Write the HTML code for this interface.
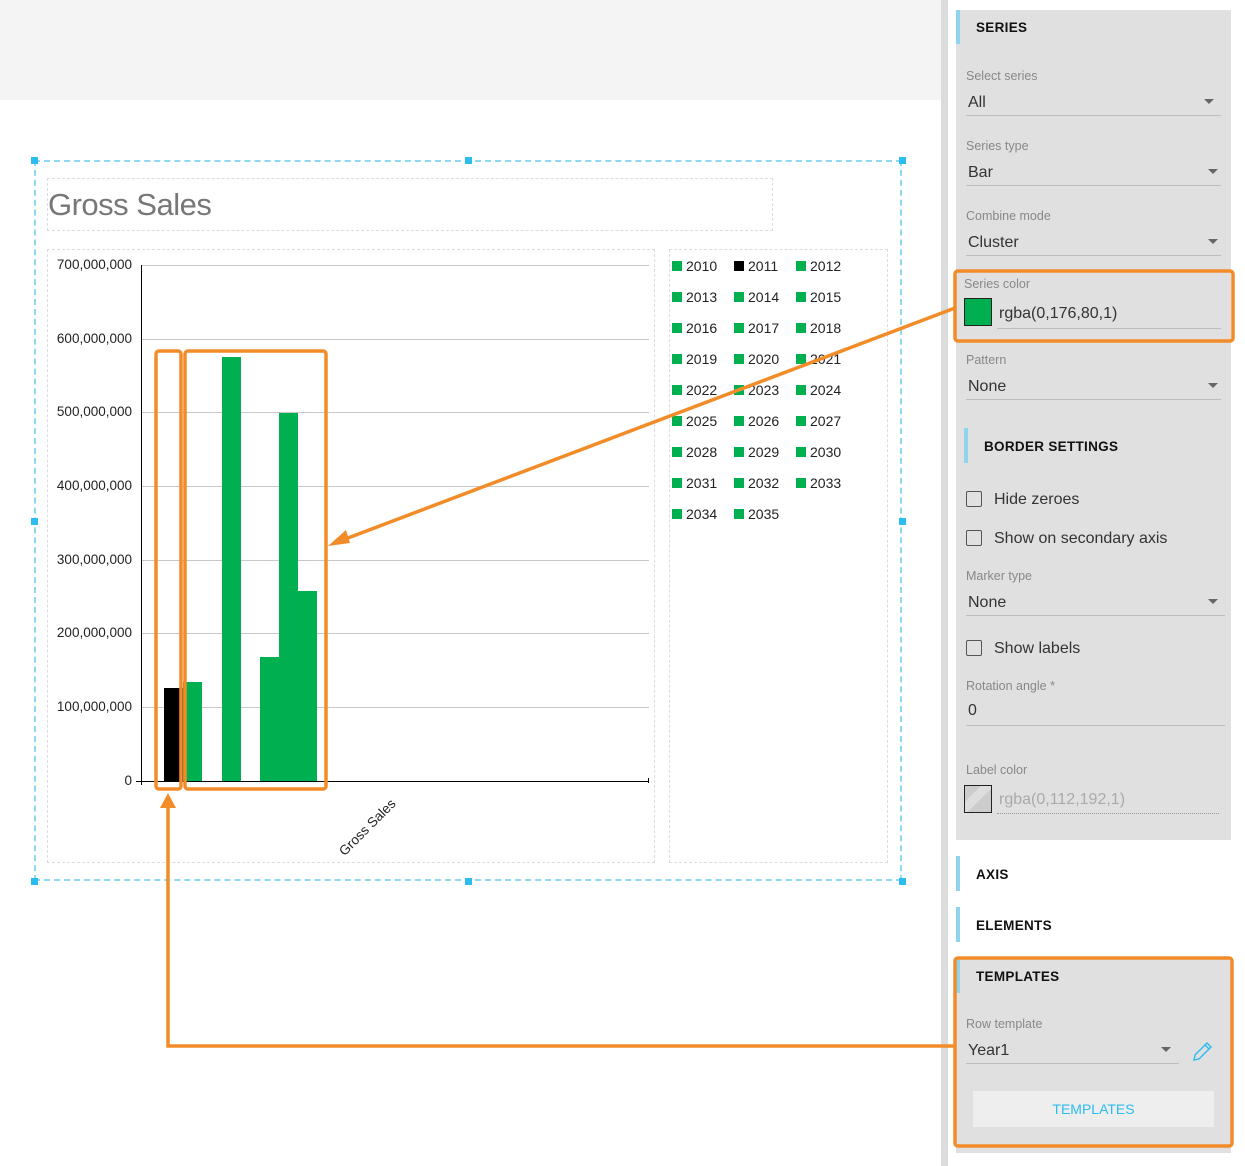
<!DOCTYPE html>
<html><head><meta charset="utf-8">
<style>
*{margin:0;padding:0;box-sizing:border-box}
body{width:1245px;height:1166px;position:relative;overflow:hidden;background:#fff;font-family:"Liberation Sans",sans-serif;color:#333}
.a{position:absolute}
.lbl{position:absolute;font-size:12.5px;color:#888;left:966px}
.val{position:absolute;font-size:16px;color:#333;left:968px}
.ul{position:absolute;left:966px;width:255px;height:1px;background:#bdbdbd}
.tri{position:absolute;width:0;height:0;border-left:5px solid transparent;border-right:5px solid transparent;border-top:5px solid #666}
.hdr{position:absolute;font-size:13.5px;font-weight:bold;color:#111;letter-spacing:.3px}
.bar{position:absolute;width:4px;background:#8fd3ee}
.cb{position:absolute;left:966px;width:16px;height:16px;border:1px solid #555;border-radius:2px}
.cbt{position:absolute;left:994px;font-size:16px;color:#333}
.yl{position:absolute;left:30px;width:102px;text-align:right;font-size:13.5px;color:#222}
.gl{position:absolute;left:141px;width:508px;height:1px;background:#c8c8c8}
.lg{position:absolute;font-size:14px;color:#222}
.lg i{display:inline-block;width:10px;height:10px;background:#00b050;margin-right:4px;vertical-align:0px}
.h{position:absolute;width:7px;height:7px;background:#2bbcf0}
</style></head><body>
<div class="a" style="left:0;top:0;width:942px;height:100px;background:#f4f4f4"></div>
<div class="a" style="left:941px;top:0;width:7px;height:1166px;background:#dcdcdc"></div>

<div class="a" style="left:34px;top:160px;width:868px;height:721px;border:2px dashed #8fd8f2"></div>
<div class="h" style="left:31px;top:157px"></div><div class="h" style="left:465px;top:157px"></div><div class="h" style="left:899px;top:157px"></div>
<div class="h" style="left:31px;top:518px"></div><div class="h" style="left:899px;top:518px"></div>
<div class="h" style="left:31px;top:878px"></div><div class="h" style="left:465px;top:878px"></div><div class="h" style="left:899px;top:878px"></div>

<div class="a" style="left:47px;top:178px;width:726px;height:53px;border:1px dashed #ddd"></div>
<div class="a" style="left:48px;top:187px;font-size:31px;color:#777;letter-spacing:-0.5px">Gross Sales</div>
<div class="a" style="left:47px;top:249px;width:608px;height:614px;border:1px dashed #ddd"></div>
<div class="a" style="left:669px;top:249px;width:219px;height:614px;border:1px dashed #ddd"></div>

<div class="gl" style="top:265px"></div><div class="gl" style="top:339px"></div><div class="gl" style="top:412px"></div><div class="gl" style="top:486px"></div><div class="gl" style="top:560px"></div><div class="gl" style="top:633px"></div><div class="gl" style="top:707px"></div>
<div class="a" style="left:136px;top:781px;width:513px;height:1px;background:#000"></div>
<div class="a" style="left:141px;top:265px;width:1px;height:520px;background:#000"></div>
<div class="a" style="left:648px;top:778px;width:1px;height:5px;background:#000"></div>
<div class="yl" style="top:257px">700,000,000</div>
<div class="yl" style="top:331px">600,000,000</div>
<div class="yl" style="top:404px">500,000,000</div>
<div class="yl" style="top:478px">400,000,000</div>
<div class="yl" style="top:552px">300,000,000</div>
<div class="yl" style="top:625px">200,000,000</div>
<div class="yl" style="top:699px">100,000,000</div>
<div class="yl" style="top:773px">0</div>

<div class="a" style="left:164px;top:688px;width:19px;height:93px;background:#000"></div>
<div class="a" style="left:183px;top:682px;width:19px;height:99px;background:#00b050"></div>
<div class="a" style="left:222px;top:357px;width:19px;height:424px;background:#00b050"></div>
<div class="a" style="left:260px;top:657px;width:19px;height:124px;background:#00b050"></div>
<div class="a" style="left:279px;top:413px;width:19px;height:368px;background:#00b050"></div>
<div class="a" style="left:298px;top:591px;width:19px;height:190px;background:#00b050"></div>
<div class="a" style="font-size:13.5px;color:#222;transform:rotate(-45deg);transform-origin:left top;white-space:nowrap;left:336px;top:848px">Gross Sales</div>

<div class="lg" style="left:672px;top:258px"><i></i>2010</div><div class="lg" style="left:734px;top:258px"><i style="background:#000"></i>2011</div><div class="lg" style="left:796px;top:258px"><i></i>2012</div>
<div class="lg" style="left:672px;top:289px"><i></i>2013</div><div class="lg" style="left:734px;top:289px"><i></i>2014</div><div class="lg" style="left:796px;top:289px"><i></i>2015</div>
<div class="lg" style="left:672px;top:320px"><i></i>2016</div><div class="lg" style="left:734px;top:320px"><i></i>2017</div><div class="lg" style="left:796px;top:320px"><i></i>2018</div>
<div class="lg" style="left:672px;top:351px"><i></i>2019</div><div class="lg" style="left:734px;top:351px"><i></i>2020</div><div class="lg" style="left:796px;top:351px"><i></i>2021</div>
<div class="lg" style="left:672px;top:382px"><i></i>2022</div><div class="lg" style="left:734px;top:382px"><i></i>2023</div><div class="lg" style="left:796px;top:382px"><i></i>2024</div>
<div class="lg" style="left:672px;top:413px"><i></i>2025</div><div class="lg" style="left:734px;top:413px"><i></i>2026</div><div class="lg" style="left:796px;top:413px"><i></i>2027</div>
<div class="lg" style="left:672px;top:444px"><i></i>2028</div><div class="lg" style="left:734px;top:444px"><i></i>2029</div><div class="lg" style="left:796px;top:444px"><i></i>2030</div>
<div class="lg" style="left:672px;top:475px"><i></i>2031</div><div class="lg" style="left:734px;top:475px"><i></i>2032</div><div class="lg" style="left:796px;top:475px"><i></i>2033</div>
<div class="lg" style="left:672px;top:506px"><i></i>2034</div><div class="lg" style="left:734px;top:506px"><i></i>2035</div>

<div class="a" style="left:956px;top:10px;width:275px;height:830px;background:#e0e0e0"></div>
<div class="bar" style="left:956px;top:10px;height:34px"></div>
<div class="hdr" style="left:976px;top:20px">SERIES</div>
<div class="lbl" style="top:69px">Select series</div><div class="val" style="top:94px">All</div><div class="tri" style="left:1204px;top:99px"></div><div class="ul" style="top:115px"></div>
<div class="lbl" style="top:139px">Series type</div><div class="val" style="top:164px">Bar</div><div class="tri" style="left:1208px;top:169px"></div><div class="ul" style="top:185px"></div>
<div class="lbl" style="top:209px">Combine mode</div><div class="val" style="top:234px">Cluster</div><div class="tri" style="left:1208px;top:239px"></div><div class="ul" style="top:255px"></div>
<div class="lbl" style="top:277px;left:964px">Series color</div>
<div class="a" style="left:964px;top:298px;width:28px;height:28px;background:#00b050;border:1px solid #222"></div>
<div class="val" style="top:305px;left:999px">rgba(0,176,80,1)</div><div class="ul" style="top:328px;left:997px;width:224px"></div>
<div class="lbl" style="top:353px">Pattern</div><div class="val" style="top:378px">None</div><div class="tri" style="left:1208px;top:383px"></div><div class="ul" style="top:399px"></div>
<div class="bar" style="left:964px;top:428px;height:35px"></div>
<div class="hdr" style="left:984px;top:439px">BORDER SETTINGS</div>
<div class="cb" style="top:491px"></div><div class="cbt" style="top:491px">Hide zeroes</div>
<div class="cb" style="top:530px"></div><div class="cbt" style="top:530px">Show on secondary axis</div>
<div class="lbl" style="top:569px">Marker type</div><div class="val" style="top:594px">None</div><div class="tri" style="left:1208px;top:599px"></div><div class="ul" style="top:615px;width:259px"></div>
<div class="cb" style="top:640px"></div><div class="cbt" style="top:640px">Show labels</div>
<div class="lbl" style="top:679px">Rotation angle *</div><div class="val" style="top:702px">0</div><div class="ul" style="top:725px;width:259px"></div>
<div class="lbl" style="top:763px;left:966px">Label color</div>
<div class="a" style="left:964px;top:785px;width:28px;height:28px;border:1px solid #222;background:linear-gradient(135deg,#ccc 30%,#ddd 30%,#ddd 55%,#ccc 55%)"></div>
<div class="val" style="top:791px;left:999px;color:#aaa">rgba(0,112,192,1)</div>
<div class="a" style="left:997px;top:813px;width:222px;border-top:1px dotted #999"></div>

<div class="bar" style="left:956px;top:856px;height:35px"></div><div class="hdr" style="left:976px;top:867px">AXIS</div>
<div class="bar" style="left:956px;top:907px;height:35px"></div><div class="hdr" style="left:976px;top:918px">ELEMENTS</div>
<div class="a" style="left:956px;top:958px;width:275px;height:195px;background:#e0e0e0"></div>
<div class="bar" style="left:956px;top:958px;height:35px"></div><div class="hdr" style="left:976px;top:969px">TEMPLATES</div>
<div class="lbl" style="top:1017px">Row template</div><div class="val" style="top:1042px">Year1</div><div class="tri" style="left:1161px;top:1047px"></div><div class="ul" style="top:1063px;width:213px"></div>
<svg class="a" style="left:1190px;top:1040px" width="24" height="24" viewBox="0 0 24 24"><path d="M4 20 L5 15 L17 3 L21 7 L9 19 Z M15 5 L19 9" fill="none" stroke="#2bbcf0" stroke-width="1.4"/></svg>
<div class="a" style="left:973px;top:1091px;width:241px;height:36px;background:#eee;color:#2bbcf0;font-size:14px;text-align:center;line-height:36px">TEMPLATES</div>

<svg class="a" style="left:0;top:0" width="1245" height="1166">
<g fill="none" stroke="#f28c28" stroke-width="3.5">
<rect x="156" y="351" width="25" height="438" rx="3"/>
<rect x="185" y="351" width="141" height="438" rx="3"/>
<rect x="955" y="271" width="278" height="70" rx="3"/>
<rect x="955" y="958" width="277" height="188" rx="3"/>
<line x1="955" y1="308" x2="340" y2="541"/>
<polyline points="955,1046 168,1046 168,805"/>
</g>
<polygon points="328,546 346,530 350,543" fill="#f28c28"/>
<polygon points="168,793 160,808 176,808" fill="#f28c28"/>
</svg>
</body></html>
